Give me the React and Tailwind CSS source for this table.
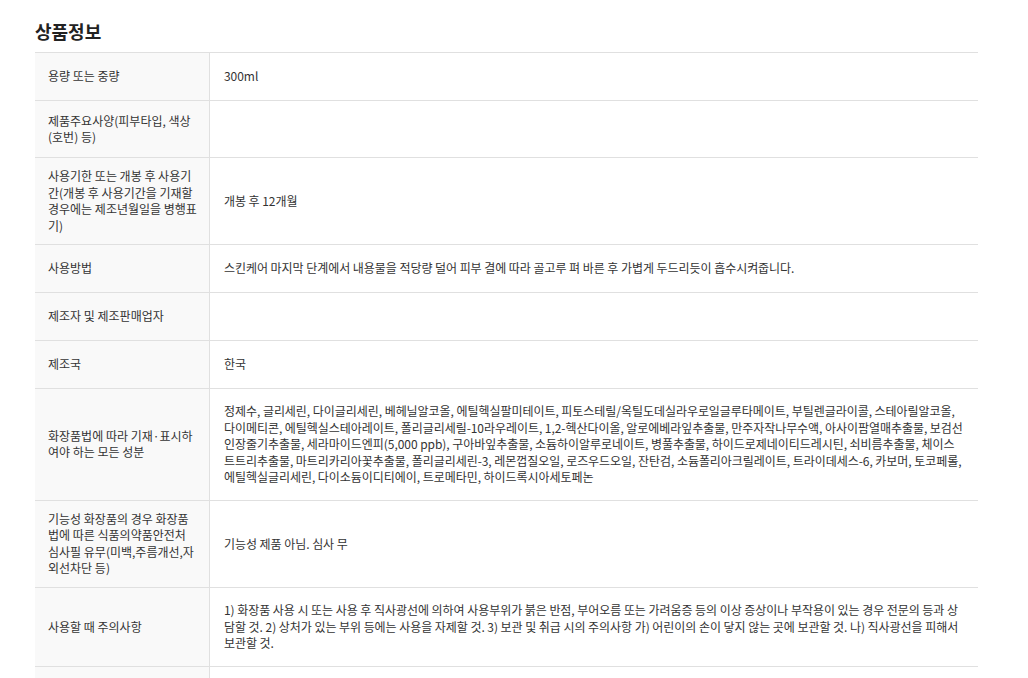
const rows = [
  { label: '용량 또는 중량', value: '300ml' },
  { label: '제품주요사양(피부타입, 색상(호번) 등)', value: '', minH: 'min-h-[57px]' },
  { label: '사용기한 또는 개봉 후 사용기간(개봉 후 사용기간을 기재할 경우에는 제조년월일을 병행표기)', value: '개봉 후 12개월' },
  { label: '사용방법', value: '스킨케어 마지막 단계에서 내용물을 적당량 덜어 피부 결에 따라 골고루 펴 바른 후 가볍게 두드리듯이 흡수시켜줍니다.' },
  { label: '제조자 및 제조판매업자', value: '' },
  { label: '제조국', value: '한국' },
  {
    label: '화장품법에 따라 기재·표시하여야 하는 모든 성분',
    value:
      '정제수, 글리세린, 다이글리세린, 베헤닐알코올, 에틸헥실팔미테이트, 피토스테릴/옥틸도데실라우로일글루타메이트, 부틸렌글라이콜, 스테아릴알코올, 다이메티콘, 에틸헥실스테아레이트, 폴리글리세릴-10라우레이트, 1,2-헥산다이올, 알로에베라잎추출물, 만주자작나무수액, 아사이팜열매추출물, 보검선인장줄기추출물, 세라마이드엔피(5,000 ppb), 구아바잎추출물, 소듐하이알루로네이트, 병풀추출물, 하이드로제네이티드레시틴, 쇠비름추출물, 체이스트트리추출물, 마트리카리아꽃추출물, 폴리글리세린-3, 레몬껍질오일, 로즈우드오일, 잔탄검, 소듐폴리아크릴레이트, 트라이데세스-6, 카보머, 토코페롤, 에틸헥실글리세린, 다이소듐이디티에이, 트로메타민, 하이드록시아세토페논',
  },
  {
    label: '기능성 화장품의 경우 화장품법에 따른 식품의약품안전처 심사필 유무(미백,주름개선,자외선차단 등)',
    value: '기능성 제품 아님. 심사 무',
  },
  {
    label: '사용할 때 주의사항',
    value:
      '1) 화장품 사용 시 또는 사용 후 직사광선에 의하여 사용부위가 붉은 반점, 부어오름 또는 가려움증 등의 이상 증상이나 부작용이 있는 경우 전문의 등과 상담할 것. 2) 상처가 있는 부위 등에는 사용을 자제할 것. 3) 보관 및 취급 시의 주의사항 가) 어린이의 손이 닿지 않는 곳에 보관할 것. 나) 직사광선을 피해서 보관할 것.',
  },
  { label: '품질보증기준', value: '본 제품은 공정거래위원회고시 소비자분쟁해결기준에 의거 교환 또는 보상받을 수 있습니다.' },
];

export default function App() {
  return (
    <div
      className="min-h-screen bg-white pl-[35px] pt-[19px] text-[#333]"
      style={{ fontFamily: "'Noto Sans CJK KR', 'Noto Sans', sans-serif" }}
    >
      <h2 className="text-[18px] leading-6 font-bold text-[#222]">상품정보</h2>
      <div className="mt-[9px] w-[943px] border-t border-[#e0e0e0]">
        {rows.map((row) => (
          <div key={row.label} className={`flex border-b border-[#e0e0e0] ${row.minH || 'min-h-[48px]'}`}>
            <div className="flex w-[175px] shrink-0 items-center border-r border-[#e0e0e0] bg-[#f9f9f9] py-[10px] pr-[10px] pl-[13px] text-[12px] leading-[16.5px]">
              {row.label}
            </div>
            <div className="flex flex-1 items-center px-[14px] py-[14px] text-[12px] leading-[16.6px] tracking-[-0.05px] text-[#333]">
              {row.value}
            </div>
          </div>
        ))}
      </div>
    </div>
  );
}
